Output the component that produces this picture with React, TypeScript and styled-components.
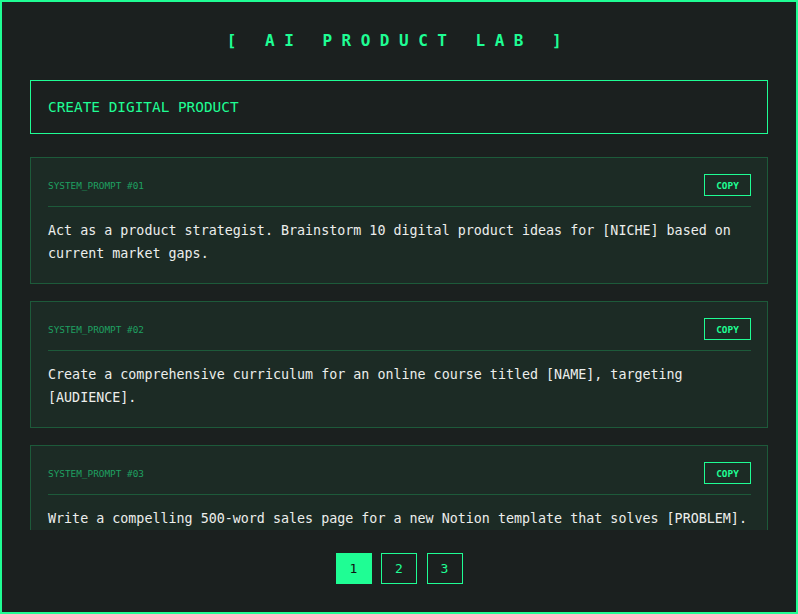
import styled, { createGlobalStyle } from "styled-components";

const ACCENT = "#1ffd94";
const MONO = `"DejaVu Sans Mono", "Liberation Mono", monospace`;

const prompts = [
  {
    id: "01",
    text: "Act as a product strategist. Brainstorm 10 digital product ideas for [NICHE] based on current market gaps.",
  },
  {
    id: "02",
    text: "Create a comprehensive curriculum for an online course titled [NAME], targeting [AUDIENCE].",
  },
  {
    id: "03",
    text: "Write a compelling 500-word sales page for a new Notion template that solves [PROBLEM].",
  },
];

const GlobalStyle = createGlobalStyle`
  * { box-sizing: border-box; }
  html, body { margin: 0; padding: 0; background: #1b201f; }
  body { font-family: ${MONO}; }
`;

const App = () => {
  return (
    <>
      <GlobalStyle />
      <Frame>
        <Title>[ AI PRODUCT LAB ]</Title>
        <CategoryBox>CREATE DIGITAL PRODUCT</CategoryBox>
        <PromptList>
          {prompts.map((p) => (
            <PromptCard key={p.id}>
              <CardHeader>
                <Label>SYSTEM_PROMPT #{p.id}</Label>
                <CopyButton>COPY</CopyButton>
              </CardHeader>
              <PromptText>{p.text}</PromptText>
            </PromptCard>
          ))}
        </PromptList>
        <Pagination>
          {[1, 2, 3].map((n) => (
            <PageButton key={n} active={n === 1}>
              {n}
            </PageButton>
          ))}
        </Pagination>
      </Frame>
    </>
  );
};

export default App;

const Frame = styled.div`
  width: 798px;
  height: 614px;
  border: 2px solid ${ACCENT};
  background: #1b201f;
  padding: 28px 28px 0;
  display: flex;
  flex-direction: column;
  overflow: hidden;
`;

const Title = styled.h1`
  margin: 0 0 28px;
  height: 22px;
  line-height: 22px;
  text-align: center;
  font-size: 16px;
  font-weight: bold;
  letter-spacing: 9.5px;
  color: ${ACCENT};
`;

const CategoryBox = styled.div`
  height: 54px;
  border: 1px solid ${ACCENT};
  padding: 0 17px;
  display: flex;
  align-items: center;
  font-size: 14.4px;
  color: ${ACCENT};
  margin-bottom: 23px;
`;

const PromptList = styled.div`
  height: 373px;
  overflow: hidden;
  display: flex;
  flex-direction: column;
  gap: 17.5px;
  flex-shrink: 0;
`;

const PromptCard = styled.div`
  background: #1c2b25;
  border: 1px solid #1d5a3a;
  padding: 16px 16px 17.5px 17px;
  flex-shrink: 0;
`;

const CardHeader = styled.div`
  display: flex;
  align-items: center;
  justify-content: space-between;
  padding-bottom: 10px;
  border-bottom: 1px solid #1d5a3a;
  margin-bottom: 12px;
`;

const Label = styled.span`
  font-size: 9.4px;
  color: #1fa062;
`;

const CopyButton = styled.button`
  height: 22px;
  width: 47px;
  padding: 0;
  background: transparent;
  border: 1px solid ${ACCENT};
  color: ${ACCENT};
  font-family: ${MONO};
  font-size: 9.4px;
  font-weight: bold;
  cursor: pointer;
`;

const PromptText = styled.p`
  margin: 0;
  font-size: 13.35px;
  line-height: 23px;
  color: #eceeec;
`;

const Pagination = styled.div`
  display: flex;
  justify-content: center;
  gap: 9.5px;
  margin-top: 23px;
`;

const PageButton = styled.button<{ active?: boolean }>`
  width: 36px;
  height: 31px;
  border: 1px solid ${ACCENT};
  background: ${(p) => (p.active ? ACCENT : "transparent")};
  color: ${(p) => (p.active ? "#111" : ACCENT)};
  font-family: ${MONO};
  font-size: 13px;
  cursor: pointer;
`;
